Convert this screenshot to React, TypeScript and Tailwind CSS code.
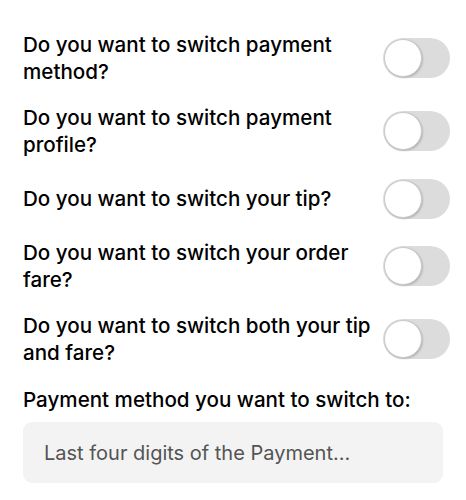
import { useState } from "react";

const questions = [
  "Do you want to switch payment method?",
  "Do you want to switch payment profile?",
  "Do you want to switch your tip?",
  "Do you want to switch your order fare?",
  "Do you want to switch both your tip and fare?",
];

function Toggle({ on, onChange }: { on: boolean; onChange: () => void }) {
  return (
    <button
      type="button"
      onClick={onChange}
      className={`relative -mr-[7px] h-[40px] w-[67px] shrink-0 rounded-full ${on ? "bg-[#276ef1]" : "bg-[#dcdcdc]"}`}
    >
      <span
        className={`absolute top-[1px] h-[38px] w-[38px] rounded-full border border-[#c9c9c9] bg-white shadow-[1px_1px_2px_rgba(0,0,0,0.18)] ${on ? "left-[28px]" : "left-[1px]"}`}
      />
    </button>
  );
}

export default function App() {
  const [values, setValues] = useState<boolean[]>(questions.map(() => false));

  return (
    <div className="min-h-[500px] bg-white px-[23px] pt-[31px] text-black [font-family:Inter,'Noto_Sans',sans-serif]">
      <div className="flex flex-col gap-[19px]">
        {questions.map((q, i) => (
          <div key={q} className="flex min-h-[43px] items-center justify-between">
            <p className="min-w-0 max-w-[358px] flex-1 text-[20.6px] font-medium leading-[27px]">{q}</p>
            <Toggle
              on={values[i]}
              onChange={() => setValues((v) => v.map((x, j) => (j === i ? !x : x)))}
            />
          </div>
        ))}
      </div>
      <p className="mt-[20px] text-[20.6px] font-medium leading-[27px]">
        Payment method you want to switch to:
      </p>
      <input
        className="mt-[9px] h-[61px] w-full rounded-[9px] bg-[#f3f3f3] px-[21px] text-[20px] text-black outline-none placeholder:text-[#545454]"
        placeholder="Last four digits of the Payment..."
      />
    </div>
  );
}
